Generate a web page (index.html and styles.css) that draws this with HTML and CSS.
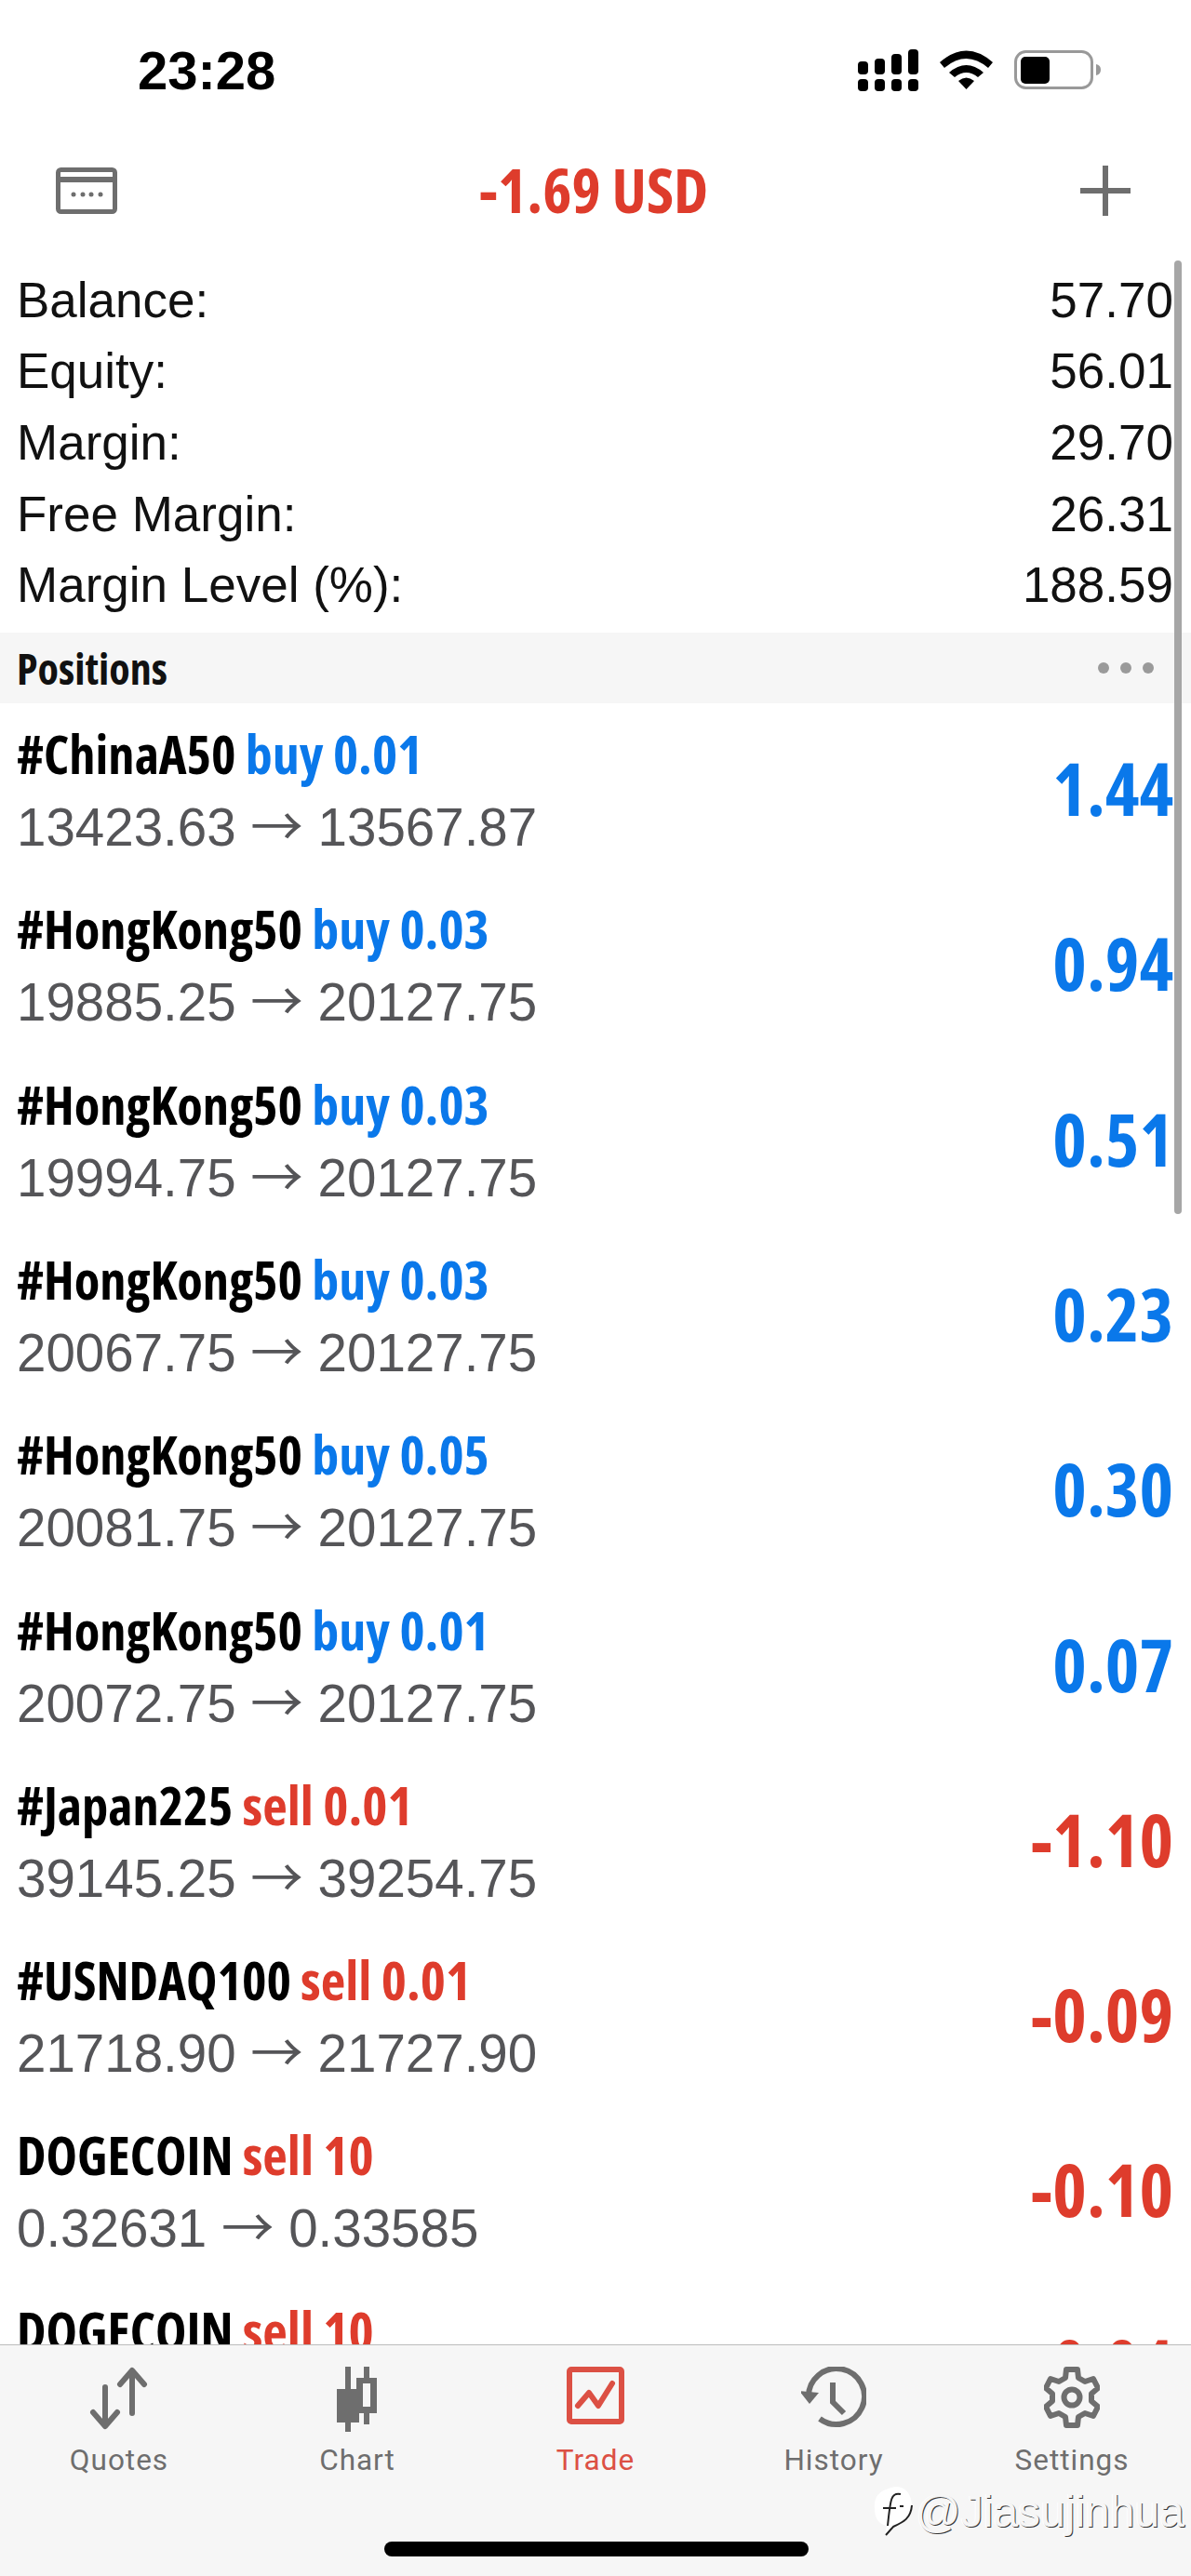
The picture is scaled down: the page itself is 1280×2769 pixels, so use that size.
FILE: index.html
```html
<!DOCTYPE html>
<html lang="en">
<head>
<meta charset="utf-8">
<title>Trade</title>
<link rel="stylesheet" href="styles.css">
</head>
<body>
<div class="phone">
  <div class="status">
    <span class="time">23:28</span>
    <svg class="status-icons" width="270" height="50" viewBox="922 50 270 50">
      <g fill="#000">
        <rect x="922" y="66" width="11" height="14" rx="4"/><rect x="940" y="63" width="11" height="17" rx="4"/><rect x="958" y="58" width="11" height="22" rx="4"/><rect x="976" y="53" width="11" height="27" rx="4"/>
        <rect x="922" y="85" width="11" height="13" rx="4"/><rect x="940" y="85" width="11" height="13" rx="4"/><rect x="958" y="85" width="11" height="13" rx="4"/><rect x="976" y="85" width="11" height="13" rx="4"/>
        <path d="M1010 67Q1038.500 42 1067 67L1062 73Q1038.500 53 1015 73Z"/>
        <path d="M1020 78Q1038.500 62 1057 78L1051 83Q1038.500 73 1026 83Z"/>
        <path d="M1030 87Q1038.500 80 1047 87L1038.500 96Z"/>
        <rect x="1097" y="61" width="31" height="29" rx="5"/>
      </g>
      <rect x="1091.500" y="55.500" width="82" height="39" rx="11" fill="none" stroke="#999" stroke-width="3"/>
      <path d="M1178 69Q1183 70 1183 75Q1183 80 1178 81Z" fill="#999"/>
    </svg>
  </div>
  <header class="topbar">
    <svg class="card-icon" width="66" height="50" viewBox="0 0 66 50">
      <rect x="2.500" y="2.500" width="61" height="45" rx="3" fill="none" stroke="#6e6e6e" stroke-width="5"/>
      <rect x="2" y="10" width="62" height="6" fill="#6e6e6e"/>
      <g fill="#6e6e6e"><circle cx="19" cy="29" r="2.500"/><circle cx="29" cy="29" r="2.500"/><circle cx="38" cy="29" r="2.500"/><circle cx="48" cy="29" r="2.500"/></g>
    </svg>
    <div class="total">-1.69 USD</div>
    <svg class="plus-icon" width="56" height="56" viewBox="0 0 56 56">
      <path d="M28 1V55M1 28H55" stroke="#6e6e6e" stroke-width="6" fill="none"/>
    </svg>
  </header>
  <main class="content">
    <section class="stats">
      <div class="stat"><span>Balance:</span><span>57.70</span></div>
      <div class="stat"><span>Equity:</span><span>56.01</span></div>
      <div class="stat"><span>Margin:</span><span>29.70</span></div>
      <div class="stat"><span>Free Margin:</span><span>26.31</span></div>
      <div class="stat"><span>Margin Level (%):</span><span>188.59</span></div>
    </section>
    <div class="section-head">
      <span class="section-title">Positions</span>
      <span class="dots"><i></i><i></i><i></i></span>
    </div>
    <div class="pos">
      <div class="pos-main"><div class="pos-name">#ChinaA50 <span class="blue">buy 0.01</span></div><div class="pos-price">13423.63 <span class="arrow">→</span> 13567.87</div></div>
      <div class="pos-val blue">1.44</div>
    </div>
    <div class="pos">
      <div class="pos-main"><div class="pos-name">#HongKong50 <span class="blue">buy 0.03</span></div><div class="pos-price">19885.25 <span class="arrow">→</span> 20127.75</div></div>
      <div class="pos-val blue">0.94</div>
    </div>
    <div class="pos">
      <div class="pos-main"><div class="pos-name">#HongKong50 <span class="blue">buy 0.03</span></div><div class="pos-price">19994.75 <span class="arrow">→</span> 20127.75</div></div>
      <div class="pos-val blue">0.51</div>
    </div>
    <div class="pos">
      <div class="pos-main"><div class="pos-name">#HongKong50 <span class="blue">buy 0.03</span></div><div class="pos-price">20067.75 <span class="arrow">→</span> 20127.75</div></div>
      <div class="pos-val blue">0.23</div>
    </div>
    <div class="pos">
      <div class="pos-main"><div class="pos-name">#HongKong50 <span class="blue">buy 0.05</span></div><div class="pos-price">20081.75 <span class="arrow">→</span> 20127.75</div></div>
      <div class="pos-val blue">0.30</div>
    </div>
    <div class="pos">
      <div class="pos-main"><div class="pos-name">#HongKong50 <span class="blue">buy 0.01</span></div><div class="pos-price">20072.75 <span class="arrow">→</span> 20127.75</div></div>
      <div class="pos-val blue">0.07</div>
    </div>
    <div class="pos">
      <div class="pos-main"><div class="pos-name">#Japan225 <span class="red">sell 0.01</span></div><div class="pos-price">39145.25 <span class="arrow">→</span> 39254.75</div></div>
      <div class="pos-val red">-1.10</div>
    </div>
    <div class="pos">
      <div class="pos-main"><div class="pos-name">#USNDAQ100 <span class="red">sell 0.01</span></div><div class="pos-price">21718.90 <span class="arrow">→</span> 21727.90</div></div>
      <div class="pos-val red">-0.09</div>
    </div>
    <div class="pos">
      <div class="pos-main"><div class="pos-name">DOGECOIN <span class="red">sell 10</span></div><div class="pos-price">0.32631 <span class="arrow">→</span> 0.33585</div></div>
      <div class="pos-val red">-0.10</div>
    </div>
    <div class="pos">
      <div class="pos-main"><div class="pos-name">DOGECOIN <span class="red">sell 10</span></div><div class="pos-price">0.32631 <span class="arrow">→</span> 0.33585</div></div>
      <div class="pos-val red">-0.04</div>
    </div>
    <div class="scrollbar"></div>
  </main>
  <nav class="tabbar">
    <div class="tab">
      <svg width="64" height="70" viewBox="0 0 64 70" fill="none" stroke="#6e6e6e" stroke-width="6" stroke-linecap="round" stroke-linejoin="round">
        <path d="M17 22V62M4 49L17 64L30 49"/><path d="M46 50V5M33 19L46 4L59 19" />
      </svg>
      <span>Quotes</span>
    </div>
    <div class="tab">
      <svg width="50" height="70" viewBox="0 0 50 70" fill="#6e6e6e">
        <rect x="12" y="0" width="6" height="70"/><rect x="3" y="24" width="24" height="36"/>
        <path d="M32 0H38V12H46V50H38V62H32V50H24V12H32ZM31 18V43H39V18Z" fill-rule="evenodd"/>
      </svg>
      <span>Chart</span>
    </div>
    <div class="tab active">
      <svg width="62" height="62" viewBox="0 0 62 62" fill="none" stroke="#dc5044" stroke-linecap="round" stroke-linejoin="round">
        <rect x="3" y="3" width="56" height="56" rx="2" stroke-width="6"/>
        <path d="M12 42L24 28L34 42L49 18" stroke-width="6"/>
      </svg>
      <span>Trade</span>
    </div>
    <div class="tab">
      <svg width="70" height="66" viewBox="3 0 70 66" fill="none" stroke="#6e6e6e" stroke-width="6">
        <path d="M11 33A30 30 0 1 1 23 56"/><path d="M1 26L12 40L22 28Z" fill="#6e6e6e" stroke="none"/>
        <path d="M37 17V38L49 50" stroke-width="6"/>
      </svg>
      <span>History</span>
    </div>
    <div class="tab">
      <svg width="60" height="66" viewBox="0 0 60 66" fill="none" stroke="#6e6e6e" stroke-width="6" stroke-linejoin="round">
        <circle cx="30" cy="33" r="8.500"/>
        <path d="M24 3H36L37 12L44 16L53 13L58 23L51 29V37L58 43L53 53L44 50L37 54L36 63H24L23 54L16 50L7 53L2 43L9 37V29L2 23L7 13L16 16L23 12Z"/>
      </svg>
      <span>Settings</span>
    </div>
    <div class="home-bar"></div>
    <div class="watermark"><svg width="44" height="56" viewBox="0 0 44 56"><path d="M20 3C33 -1 43 9 42 26C41 38 31 42 20 46L13 54L15 44C5 42 1 34 2 20C3 10 9 6 20 3Z" fill="#fff"/><path d="M30 10C20 8 19 14 16 44M11 25H25M29 23H33M42 22C41 36 33 40 22 45L14 54" stroke="#222" stroke-width="2" fill="none"/></svg><span>@Jiasujinhua</span></div>
  </nav>
</div>
</body>
</html>
```
FILE: styles.css
```css
* { box-sizing: border-box; }
html, body { margin: 0; padding: 0; }
body { background: #fff; font-family: "Liberation Sans", Arial, sans-serif; }
.phone { width: 1280px; height: 2769px; display: flex; flex-direction: column; overflow: hidden; }

.status { height: 130px; flex: none; display: flex; justify-content: space-between; align-items: flex-start; padding: 50px 88px 0 148px; }
.time { font-size: 58px; line-height: 52px; font-weight: 700; color: #000; }
.status-icons { display: block; margin-top: 0; }

.topbar { height: 150px; flex: none; display: flex; align-items: center; justify-content: space-between; padding: 0 64px 0 60px; }
.total { font-family: "Open Sans", sans-serif; font-stretch: 75%; font-weight: 700; font-size: 66.500px; line-height: 80px; margin: -4px 10px 0 0; color: #de3c2c; }

.content { position: relative; flex: 1; min-height: 0; overflow: hidden; }
.stats { padding: 4px 19px 13px 18px; }
.stat { display: flex; justify-content: space-between; height: 76.600px; align-items: center; font-size: 53px; color: #111; }

.section-head { height: 76px; background: #f6f6f6; display: flex; align-items: center; justify-content: space-between; padding: 0 40px 0 18px; }
.section-title { font-family: "Open Sans", sans-serif; font-stretch: 75%; font-weight: 700; font-size: 46px; color: #111; }
.dots { display: flex; gap: 12px; }
.dots i { width: 12px; height: 12px; border-radius: 50%; background: #9a9a9a; }

.pos { height: 188.300px; display: flex; justify-content: space-between; align-items: center; padding: 0 19px 0 18px; }
.pos-main { display: flex; flex-direction: column; gap: 12px; }
.pos-name { font-family: "Open Sans", sans-serif; font-stretch: 75%; font-weight: 700; font-size: 56.500px; line-height: 66px; color: #000; white-space: nowrap; }
.pos-name span { font-size: 58px; }
.pos-price { font-size: 56.500px; line-height: 66px; color: #555558; white-space: nowrap; }
.arrow { font-family: "Noto Sans CJK SC", sans-serif; line-height: 1; }
.pos-val { font-family: "Open Sans", sans-serif; font-stretch: 75%; font-weight: 700; font-size: 78px; line-height: 90px; margin-top: -6px; }
.blue { color: #0a78ea; }
.red { color: #de3c2c; }

.scrollbar { position: absolute; right: 10px; top: 0; width: 8px; height: 1025px; background: #a6a6a6; border-radius: 4px; }

.tabbar { position: relative; height: 249px; flex: none; background: #f6f6f6; border-top: 1px solid #bcbcbc; display: grid; grid-template-columns: repeat(5, 256px); padding-top: 23px; align-content: start; }
.tab { display: flex; flex-direction: column; align-items: center; height: 119px; justify-content: space-between; font-family: Roboto, sans-serif; font-size: 31.500px; line-height: 36px; letter-spacing: 1px; color: #6e6e6e; }
.tab.active { color: #dc5044; }
.home-bar { position: absolute; left: 413px; top: 211px; width: 456px; height: 16px; border-radius: 8px; background: #000; }
.watermark { position: absolute; left: 938px; top: 150px; display: flex; align-items: center; gap: 2px; font-family: "Liberation Sans", sans-serif; font-size: 48px; color: #f6f6f6; text-shadow: 1px 1px 0 #333, -1px 0 0 #fff; }
```
